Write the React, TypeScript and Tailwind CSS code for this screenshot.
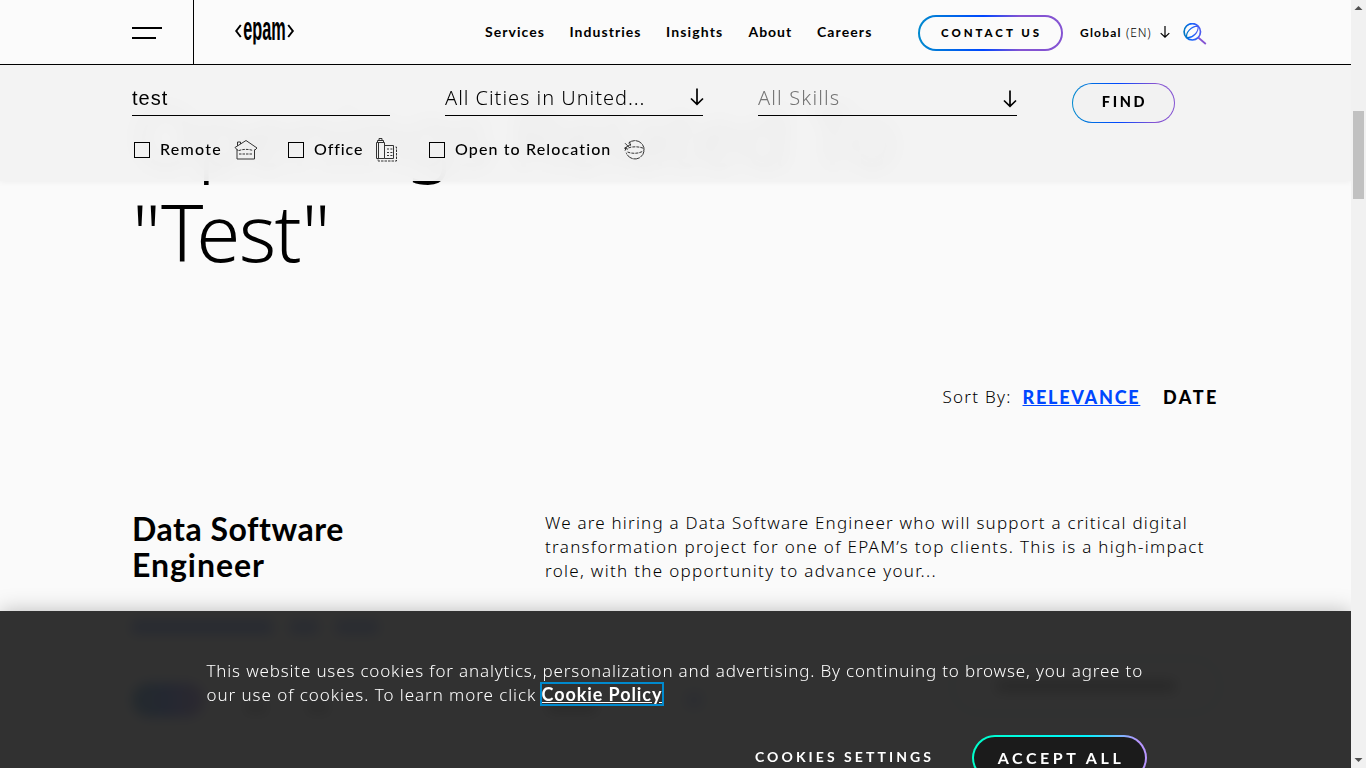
const latin = "font-['Lato','Noto_Sans',sans-serif]";
const light = "font-['Noto_Sans','Open_Sans',sans-serif] font-light";

const navItems = [
  { label: "Services", style: "w-[84.5px] tracking-[1.05px]" },
  { label: "Industries", style: "w-[96.5px] tracking-[1.05px]" },
  { label: "Insights", style: "w-[82.5px] tracking-[1.15px]" },
  { label: "About", style: "w-[68.5px] tracking-[.95px]" },
  { label: "Careers", style: "w-[101px] tracking-[1.1px]" },
];

function ArrowDown({ className }: { className: string }) {
  return (
    <svg viewBox="0 0 14 18" className={className} fill="none" stroke="#000" strokeWidth="1.7">
      <path d="M7 .5V16M1 10.5L7 16.3L13 10.5" />
    </svg>
  );
}

function Logo() {
  return (
    <svg width="60" height="26" viewBox="0 0 60 26" aria-label="epam" className="mt-[2px]">
      <defs>
        <clipPath id="logo-box">
          <rect x="0" y="0" width="60" height="24.5" />
        </clipPath>
      </defs>
      <path d="M5.8 5L1.2 11L5.8 17M53.2 5L57.8 11L53.2 17" fill="none" stroke="#000" strokeWidth="2" />
      <g clipPath="url(#logo-box)">
        <text x="8.2" y="20" fontSize="33" fontWeight="700" fontFamily="Liberation Sans, sans-serif" textLength="42.5" lengthAdjust="spacingAndGlyphs">
          epam
        </text>
      </g>
    </svg>
  );
}

function SearchIcon() {
  return (
    <svg width="24" height="24" viewBox="0 0 24 24" fill="none" strokeWidth="1.7">
      <defs>
        <linearGradient id="lens" x1="0" y1="0" x2="1" y2="0">
          <stop offset="0" stopColor="#0078c2" />
          <stop offset=".4" stopColor="#0f62fe" />
          <stop offset="1" stopColor="#4d5cf0" />
        </linearGradient>
      </defs>
      <circle cx="9.3" cy="8.8" r="8.2" stroke="url(#lens)" />
      <path d="M3.8 14.5C2.5 9.8 8.5 2.8 15 3.1M3.8 14.5C10 15.3 16 8.8 15 3.1" stroke="url(#lens)" strokeWidth="1.2" />
      <path d="M15.2 14.5L22.8 21" stroke="#8453d2" />
    </svg>
  );
}

function HouseIcon() {
  return (
    <svg width="24" height="24" viewBox="0 0 24 24" fill="none" stroke="#333" strokeWidth="1">
      <path d="M1 9.5L12 2.5L23 10L21 12" />
      <path d="M1 9.5L3 11.5V21H20.5V11.5M3.5 8V4H6.5V6" />
      <path d="M5 12.5C9 11 15 11 19 12.5M5 16H19" strokeDasharray="2.5 1" />
      <path d="M2.5 11.5L4.5 12.5" />
    </svg>
  );
}

function OfficeIcon() {
  return (
    <svg width="24" height="26" viewBox="0 0 24 26" fill="none" stroke="#333" strokeWidth="1">
      <path d="M1.5 21.5V5.5H9.5V21.5ZM2.5 5.5V3.5H8.5V5.5M4 3.5V1.5H7V3.5M3.5 6V21" />
      <path d="M9.5 8.5H18.5V21.5H9.5" />
      <path d="M20.5 10H21.5V24H3V22" strokeDasharray="2.5 1" />
      <path d="M12 12H17.5M12 15.5H17.5M12 18.5H17.5" strokeDasharray="2 1.4" />
    </svg>
  );
}

function GlobeIcon() {
  return (
    <svg width="24" height="24" viewBox="0 0 24 24" fill="none" stroke="#333" strokeWidth="1">
      <path d="M5.5 5.2A9.2 9.2 0 1 1 3.2 14.7" strokeDasharray="7 .6" />
      <path d="M5.5 10C9 8.2 17 8.5 21 10.5M4.5 14C9 16 17 15.8 20.8 12.5" strokeDasharray="3 1" />
      <path d="M1.5 10.2L8 6.2M2 5.2L6.5 9.7M3.5 9.2L2 12.7M1.5 10.2L5 11.2M6.5 3.7L7.5 7.7" />
    </svg>
  );
}

const locations = [
  { label: "Remote", box: "w-[154px]", text: "tracking-[1.25px]", gap: "ml-[12.5px]", Icon: HouseIcon },
  { label: "Office", box: "w-[141px]", text: "tracking-[.9px]", gap: "ml-[12px]", Icon: OfficeIcon },
  { label: "Open to Relocation", box: "w-[240px]", text: "tracking-[1.12px]", gap: "ml-[12px]", Icon: GlobeIcon },
];

function Header() {
  return (
    <header className="flex h-[65px] items-center border-b border-black bg-[#fbfbfb] pl-[132px]">
      <button className="flex w-[61px] flex-col gap-2 pt-[2px]" aria-label="Menu">
        <span className="h-[2px] w-[30px] bg-black" />
        <span className="h-[2px] w-6 bg-black" />
      </button>
      <div className="flex w-[292px] items-center self-stretch border-l border-black pl-[41px]">
        <Logo />
      </div>
      <nav className={`flex text-[14px] leading-5 font-bold ${latin}`}>
        {navItems.map((n) => (
          <a key={n.label} className={n.style}>{n.label}</a>
        ))}
      </nav>
      <button className={`mt-[2px] flex h-9 w-[145px] items-center justify-center rounded-full border-2 border-transparent pl-[2px] text-[11.5px] leading-4 font-black tracking-[2.95px] whitespace-nowrap [background:linear-gradient(#fbfbfb,#fbfbfb)_padding-box,linear-gradient(90deg,#008ace,#0047ff_45%,#8453d2_70%)_border-box] ${latin}`}>
        CONTACT US
      </button>
      <div className="mt-[2px] ml-[17px] flex w-[80px] items-center text-[12px] leading-5 whitespace-nowrap">
        <span className={`w-[46px] font-bold tracking-[1.2px] ${latin}`}>Global</span>
        <span className={`tracking-[.85px] ${light}`}>(EN)</span>
      </div>
      <ArrowDown className="h-[14px] w-[10px]" />
      <div className="mt-[5px] ml-[13px]"><SearchIcon /></div>
    </header>
  );
}

function Filters() {
  return (
    <section className="h-[116px] bg-[#f2f2f2]/95 pt-[18px] pl-[132px] shadow-[0_1px_6px_rgba(0,0,0,.05)] backdrop-blur-[10px]">
      <div className="flex">
        <div className="mr-[55px] h-[33px] w-[258px] border-b border-black pt-[1px] font-['Liberation_Sans',Arial,sans-serif] text-[20px] leading-7 tracking-[1px]">
          test
        </div>
        <div className={`mr-[55px] flex h-[33px] w-[258px] justify-between border-b border-black pt-px text-[20px] leading-7 tracking-[.97px] ${light}`}>
          <span>All Cities in United...</span>
          <ArrowDown className="-mr-px mt-[4px] h-[18px] w-[14px]" />
        </div>
        <div className={`mr-[55px] flex h-[33px] w-[259px] justify-between border-b border-black pt-px text-[20px] leading-7 tracking-[1.15px] ${light}`}>
          <span className="text-[#757575]">All Skills</span>
          <ArrowDown className="mt-[6px] h-[18px] w-[14px]" />
        </div>
        <button className={`flex h-10 w-[103px] items-center justify-center rounded-full border-[1.5px] border-transparent pb-[2px] pl-[2px] text-[14.5px] leading-5 font-black tracking-[2.6px] [background:linear-gradient(#f2f2f2,#f2f2f2)_padding-box,linear-gradient(90deg,#008ace,#0047ff_45%,#8453d2_80%)_border-box] ${latin}`}>
          FIND
        </button>
      </div>
      <div className={`mt-[14px] flex h-[26px] items-center pl-[2px] text-[16px] font-medium ${latin}`}>
        {locations.map(({ label, box, text, gap, Icon }) => (
          <label key={label} className={`flex items-center whitespace-nowrap ${box}`}>
            <span className="mr-[10px] h-4 w-4 border border-black" />
            <span className={`pb-[2px] ${text}`}>{label}</span>
            <span className={gap}><Icon /></span>
          </label>
        ))}
      </div>
    </section>
  );
}

function CookieBanner() {
  return (
    <section className="h-[157px] bg-[#262626]/95 pt-[48px] text-white shadow-[0_0_20px_rgba(0,0,0,.25)] backdrop-blur-[6px]">
      <p className={`ml-[206.5px] text-[17px] leading-6 whitespace-nowrap ${light}`}>
        <span className="block tracking-[.83px]">
          This website uses cookies for analytics, personalization and advertising. By continuing to browse, you agree to
        </span>
        <span className="flex items-center">
          <span className="w-[335px] tracking-[.94px]">our use of cookies. To learn more click</span>
          <a className={`-mt-[2px] text-[18px] leading-5 font-bold tracking-[.92px] underline outline-2 outline-[#008ace] ${latin}`}>Cookie Policy</a>
        </span>
      </p>
      <div className={`mt-[28px] flex items-start pl-[755px] font-bold whitespace-nowrap ${latin}`}>
        <button className="mt-[12px] w-[217px] text-left text-[14px] leading-5 tracking-[3.07px]">COOKIES SETTINGS</button>
        <button className="flex h-[46px] w-[175px] items-center justify-center rounded-full border-2 border-transparent pb-px pl-[3px] text-[16px] leading-5 tracking-[3.55px] [background:linear-gradient(#1b1b1b,#1b1b1b)_padding-box,linear-gradient(90deg,#00ffcb,#00f6ff_65%,#b896ff_95%)_border-box]">
          ACCEPT ALL
        </button>
      </div>
    </section>
  );
}

function Results() {
  return (
    <main className="pt-[87px] pl-[132px] whitespace-nowrap">
      <h1 className={`text-[80px] leading-[96px] ${light}`}>
        <span className="block pl-[3px] tracking-[.5px]">Openings Related To</span>
        <span className="block tracking-[-1.7px]">"Test"</span>
      </h1>
      <div className="mt-[106px] flex items-center pl-[810.5px] text-[17px] leading-6">
        <span className={`w-[80px] tracking-[1.25px] ${light}`}>Sort By:</span>
        <a className={`w-[140.5px] text-[18px] font-black tracking-[1.75px] text-[#0047ff] ${latin}`}>
          <span className="underline">RELEVANCE</span>
        </a>
        <a className={`text-[18px] font-black tracking-[2.5px] ${latin}`}>DATE</a>
      </div>
      <article>
        <div className="mt-[102px] flex">
          <h2 className={`w-[413px] text-[32px] leading-9 font-bold ${latin}`}>
            <span className="block tracking-[.53px]">Data Software</span>
            <span className="block tracking-[.96px]">Engineer</span>
          </h2>
          <p className={`text-[17px] leading-6 ${light}`}>
            <span className="block tracking-[1.21px]">We are hiring a Data Software Engineer who will support a critical digital</span>
            <span className="block tracking-[1.3px]">transformation project for one of EPAM’s top clients. This is a high-impact</span>
            <span className="block tracking-[1.31px]">role, with the opportunity to advance your...</span>
          </p>
        </div>
        <div className="mt-[37px] flex gap-[18px]">
          <span className="h-[14px] w-[140px] bg-[#0047ff]/70" />
          <span className="h-[14px] w-[28px] bg-[#0047ff]/60" />
          <span className="h-[14px] w-[42px] bg-[#0047ff]/60" />
        </div>
        <div className="mt-[49px] flex h-[34px] items-center">
          <span className="h-[34px] w-[72px] rounded-full bg-linear-to-r from-[#006eae] via-[#0047ff] to-[#8453d2]" />
          <span className="mt-[14px] ml-[42px] h-3 w-[20px] bg-black/40" />
          <span className="mt-[14px] ml-[42px] h-3 w-[20px] bg-black/40" />
          <span className="mt-[14px] ml-[220px] h-3 w-[48px] bg-black/50" />
          <span className="ml-[90px] h-4 w-[16px] bg-[#0047ff]/40" />
          <span className="-mt-[28px] ml-[248px] flex h-[58px] w-[272px] items-center justify-center rounded-full border-3 border-[#0047ff]/30">
            <span className="h-3 w-[178px] bg-black/60" />
          </span>
        </div>
      </article>
    </main>
  );
}

function Scrollbar() {
  return (
    <aside className="flex h-[768px] w-[15px] flex-col items-center justify-between bg-[#f1f1f1]">
      <svg width="15" height="15" viewBox="0 0 15 15"><path d="M3.5 10L7.5 6L11.5 10Z" fill="#505050" /></svg>
      <div className="flex-1 pt-[96px]"><div className="h-[88px] w-[11px] bg-[#c1c1c1]" /></div>
      <svg width="15" height="15" viewBox="0 0 15 15"><path d="M3.5 5L7.5 9L11.5 5Z" fill="#505050" /></svg>
    </aside>
  );
}

export default function App() {
  return (
    <div className="flex h-[768px] w-[1366px] overflow-hidden bg-[#fafafa] text-black">
      <div className="relative h-[768px] w-[1351px] overflow-hidden">
        <Results />
        <div className="absolute inset-x-0 top-0">
          <Header />
          <Filters />
        </div>
        <div className="absolute inset-x-0 bottom-0">
          <CookieBanner />
        </div>
      </div>
      <Scrollbar />
    </div>
  );
}
